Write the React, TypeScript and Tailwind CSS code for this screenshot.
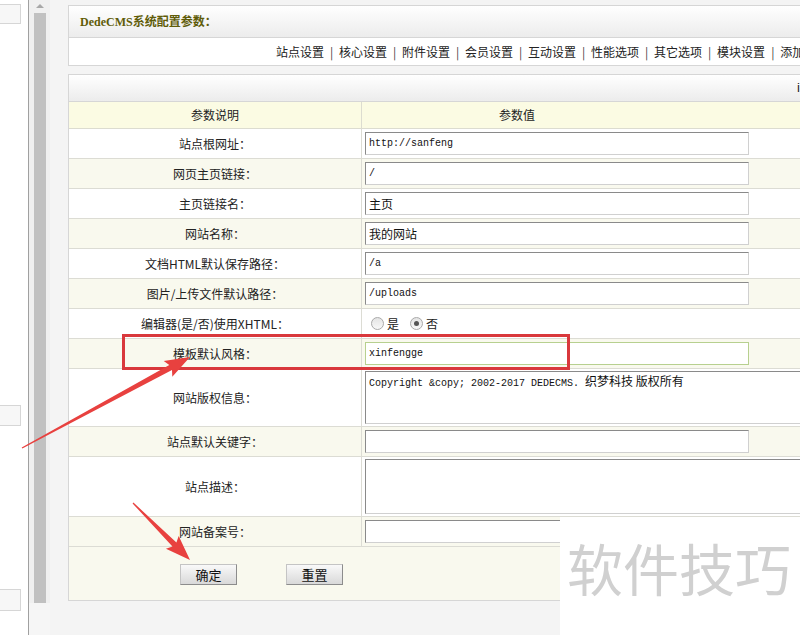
import React from 'react'

const CJK = "font-['Noto_Sans_CJK_SC',sans-serif]"
const MONO = "font-['Liberation_Mono','Noto_Sans_CJK_SC',monospace]"

type Row = {
  label: string
  kind: 'input' | 'radio' | 'textarea'
  value?: string
  cjk?: boolean
  green?: boolean
  h?: string
}

const ROWS: Row[] = [
  { label: '站点根网址：', kind: 'input', value: 'http://sanfeng' },
  { label: '网页主页链接：', kind: 'input', value: '/' },
  { label: '主页链接名：', kind: 'input', value: '主页', cjk: true },
  { label: '网站名称：', kind: 'input', value: '我的网站', cjk: true },
  { label: '文档HTML默认保存路径：', kind: 'input', value: '/a' },
  { label: '图片/上传文件默认路径：', kind: 'input', value: '/uploads' },
  { label: '编辑器(是/否)使用XHTML：', kind: 'radio' },
  { label: '模板默认风格：', kind: 'input', value: 'xinfengge', green: true },
  { label: '网站版权信息：', kind: 'textarea', value: 'copyright', h: 'h-[58px]' },
  { label: '站点默认关键字：', kind: 'input', value: '' },
  { label: '站点描述：', kind: 'textarea', value: '', h: 'h-[60px]' },
  { label: '网站备案号：', kind: 'input', value: '' },
]

const NAV = ['站点设置', '核心设置', '附件设置', '会员设置', '互动设置', '性能选项', '其它选项', '模块设置', '添加新变量']

function Radio({ checked }: { checked?: boolean }) {
  return (
    <span className="flex h-[13px] w-[13px] items-center justify-center rounded-full border border-[#a9a9a9] bg-gradient-to-b from-[#e4e4e4] to-[#f8f8f8]">
      {checked && <span className="h-[5px] w-[5px] rounded-full bg-[#555]" />}
    </span>
  )
}

function Arrow({ x1, y1, x2, y2 }: { x1: number; y1: number; x2: number; y2: number }) {
  const L = Math.hypot(x2 - x1, y2 - y1)
  const a = (Math.atan2(y2 - y1, x2 - x1) * 180) / Math.PI
  const pts = `0,-0.6 ${L - 22},-2.8 ${L - 25},-9 ${L},0 ${L - 25},9 ${L - 22},2.8 0,0.6`
  return (
    <g transform={`translate(${x1} ${y1}) rotate(${a})`}>
      <polygon points={pts} fill="#e8413f" />
    </g>
  )
}

function Value({ row }: { row: Row }) {
  if (row.kind === 'radio') {
    return (
      <div className={`flex items-center gap-[3px] pl-[6px] text-[12px] text-[#222] ${CJK}`}>
        <Radio />
        <span className="mr-[8px]">是</span>
        <Radio checked />
        <span>否</span>
      </div>
    )
  }
  if (row.kind === 'textarea') {
    return (
      <div className="h-full w-full py-[2px]">
        <div className="h-full w-[500px] border border-t-[#8a8a8a] border-l-[#8a8a8a] border-r-[#d0d0d0] border-b-[#d0d0d0] bg-white px-[3px] pt-[1px] leading-[14px] text-[#111]">
          {row.value === 'copyright' && (
            <>
              <span className={`${MONO} text-[10px]`}>Copyright &amp;copy; 2002-2017 DEDECMS. </span>
              <span className={`${CJK} text-[12px]`}>织梦科技 版权所有</span>
            </>
          )}
        </div>
      </div>
    )
  }
  return (
    <div
      className={`flex h-[23px] w-[384px] items-center bg-white px-[3px] text-[#111] ${
        row.green
          ? 'border border-[#b7d08f]'
          : 'border border-t-[#8a8a8a] border-l-[#8a8a8a] border-r-[#d0d0d0] border-b-[#d0d0d0]'
      } ${row.cjk ? `${CJK} text-[12px]` : `${MONO} text-[10px]`}`}>
      {row.value}
    </div>
  )
}

export default function App() {
  return (
    <div className="relative flex h-[635px] w-[800px] overflow-hidden bg-[#f4f4f4]">
      {/* left frame */}
      <div className="flex w-[29px] shrink-0 flex-col border-r border-[#a0a0a0] bg-white">
        <div className="mt-[4px] h-[20px] w-[21px] border border-l-0 border-[#d6d6d6] bg-[#f7f7f7]" />
        <div className="mt-[381px] h-[21px] w-[21px] border border-l-0 border-[#d6d6d6] bg-[#f7f7f7]" />
        <div className="mt-[163px] h-[22px] w-[21px] border border-l-0 border-[#d6d6d6] bg-[#f7f7f7]" />
      </div>

      {/* scrollbar */}
      <div className="flex w-[21px] shrink-0 flex-col items-center bg-[#f0f0f0]">
        <div className="mt-[4px] h-0 w-0 border-x-[4px] border-b-[4px] border-x-transparent border-b-[#a8a8a8]" />
        <div className="mt-[5px] h-[590px] w-[12px] bg-[#c1c1c1]" />
        <div className="w-full flex-1 bg-[#f6f6f6]" />
      </div>

      {/* main */}
      <div className="flex-1 pl-[18px] pt-[5px]">
        <div className="w-[780px] border border-[#d6d6d6] bg-white">
          <div className="flex h-[32px] items-center border-b border-[#d6d6d6] bg-gradient-to-b from-white to-[#ececec] pl-[11px]">
            <span className="text-[12px] font-bold text-[#5f5c08]">
              <span className="font-['Liberation_Serif',serif]">DedeCMS</span>
              <span className={CJK}>系统配置参数：</span>
            </span>
          </div>
          <div className={`flex h-[27px] items-center gap-[6px] whitespace-nowrap pl-[207px] text-[12px] text-[#222] ${CJK}`}>
            {NAV.map((n, i) => (
              <React.Fragment key={n}>
                {i > 0 && <span className="w-[3px] text-center text-[#444]">|</span>}
                <span>{n}</span>
              </React.Fragment>
            ))}
          </div>
        </div>

        <div className="mt-[8px] w-[780px] border border-[#d6d6d6] bg-white">
          <div className="flex h-[27px] items-center border-b border-[#d6d6d6] bg-gradient-to-b from-white to-[#ececec] pl-[728px] text-[13px] text-[#222]">
            <span className="font-['Liberation_Sans',sans-serif]">i</span>
          </div>
          <div className={`flex h-[27px] border-b border-[#dcdcd0] bg-[#fbfbe3] text-[12px] text-[#222] ${CJK}`}>
            <div className="flex w-[293px] shrink-0 items-center justify-center border-r border-[#dcdcd0]">参数说明</div>
            <div className="flex flex-1 items-center justify-center pr-[175px]">参数值</div>
          </div>
          {ROWS.map((row, i) => (
            <div
              key={row.label}
              className={`flex ${row.h ?? 'h-[30px]'} border-b border-[#dcdcd4] ${i % 2 === 1 ? 'bg-[#f9f9ee]' : 'bg-white'}`}>
              <div className={`flex w-[293px] shrink-0 items-center justify-center border-r border-[#dcdcd4] text-[12px] text-[#222] ${CJK}`}>
                {row.label}
              </div>
              <div className="flex flex-1 items-center pl-[3px]">
                <Value row={row} />
              </div>
            </div>
          ))}
          <div className={`flex h-[53px] gap-[49px] bg-[#f9f9ee] pl-[111px] pt-[17px] text-[13px] text-[#111] ${CJK}`}>
            {['确定', '重置'].map((b) => (
              <div
                key={b}
                className="flex h-[21px] w-[57px] items-center justify-center border border-[#c4c4c4] border-b-[#8c8c8c] border-r-[#8c8c8c] bg-gradient-to-b from-[#f9f9f9] to-[#d9d9d9]">
                {b}
              </div>
            ))}
          </div>
        </div>
      </div>

      {/* annotations */}
      <div className="pointer-events-none absolute left-[122px] top-[334px] h-[36px] w-[448px] border-[3px] border-[#d9383c]" />
      <svg className="pointer-events-none absolute left-0 top-0" width={800} height={635}>
        <Arrow x1={22} y1={448} x2={190} y2={357} />
        <Arrow x1={133} y1={503} x2={190} y2={560} />
      </svg>

      {/* watermark */}
      <div className="absolute left-[560px] top-[517px] h-[118px] w-[240px] bg-white pl-[7px] pt-[22px]">
        <span className={`text-[56px] leading-none text-[#d0d0d0] ${CJK}`}>软件技巧</span>
      </div>
    </div>
  )
}
